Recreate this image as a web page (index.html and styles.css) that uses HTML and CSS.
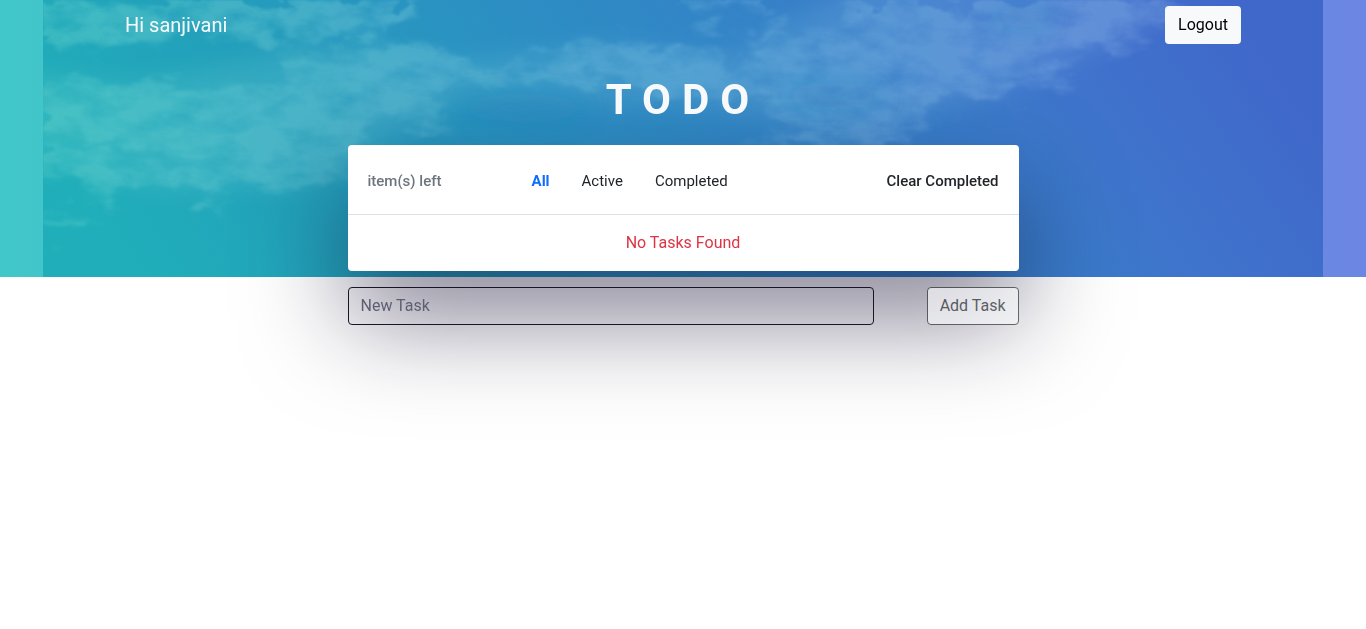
FILE: index.html
```html
<!DOCTYPE html>
<html lang="en">
<head>
<meta charset="utf-8">
<meta name="viewport" content="width=device-width, initial-scale=1">
<title>Todo</title>
<link rel="stylesheet" href="styles.css">
</head>
<body>
<div class="banner" aria-hidden="true">
  <svg class="sky" viewBox="0 0 1280 277" preserveAspectRatio="xMidYMin slice">
    <defs>
      <linearGradient id="sky" x1="0" y1="0.55" x2="1" y2="0.4">
        <stop offset="0" stop-color="#20afba"/>
        <stop offset="0.2" stop-color="#239fbb"/>
        <stop offset="0.42" stop-color="#2c8fc3"/>
        <stop offset="0.65" stop-color="#3680c8"/>
        <stop offset="0.82" stop-color="#3f74cc"/>
        <stop offset="1" stop-color="#4067ca"/>
      </linearGradient>
      <linearGradient id="veil" gradientUnits="userSpaceOnUse" x1="0" y1="0" x2="1280" y2="0">
        <stop offset="0" stop-color="#58cbc8"/>
        <stop offset="0.5" stop-color="#64aed8"/>
        <stop offset="1" stop-color="#7896e0"/>
      </linearGradient>
      <filter id="cloud" x="0" y="0" width="1280" height="277" filterUnits="userSpaceOnUse" color-interpolation-filters="sRGB">
        <feTurbulence type="fractalNoise" baseFrequency="0.025 0.045" numOctaves="6" seed="21" result="n"/>
        <feGaussianBlur in="SourceGraphic" stdDeviation="5" result="s"/>
        <feDisplacementMap in="s" in2="n" scale="60" xChannelSelector="R" yChannelSelector="G" result="d"/>
        <feGaussianBlur in="d" stdDeviation="1" result="b"/>
        <feColorMatrix in="n" values="0 0 0 0 1  0 0 0 0 1  0 0 0 0 1  0 0 2 0 -0.25" result="m"/>
        <feComposite in="b" in2="m" operator="in"/>
      </filter>
      <filter id="soft" x="-20%" y="-60%" width="140%" height="220%"><feGaussianBlur stdDeviation="12"/></filter>
    </defs>
    <rect width="1280" height="277" fill="url(#sky)"/>
    <g fill="url(#veil)" opacity="0.3" filter="url(#soft)">
      <path d="M-20 75L90 84L260 50L420 60L560 46L690 55L820 -20L1120 -20L1110 25L980 85L830 130L640 105L420 100L330 150L270 185L120 190L-20 150Z"/>
    </g>
    <g fill="url(#veil)" opacity="0.56" filter="url(#cloud)">
      <path d="M-30 -30H40L60 5L95 18L130 -30H240L260 5L330 -30H400L350 30L240 42L150 28L100 46L10 42L-30 12Z"/>
      <path d="M-30 80L60 86L110 80L160 92L190 80L250 86L232 60L262 48L290 58L320 42L390 44L420 70L470 72L510 50L570 42L640 44L690 68L760 40L800 24L820 -30H1110L1150 -10L1130 26L1070 46L980 52L1030 76L970 96L900 102L880 122L820 144L760 118L700 98L600 92L560 86L490 78L430 86L380 106L420 136L350 124L300 144L330 168L270 188L210 178L160 198L110 180L60 190L10 178L-30 178L-30 145L60 150L80 168L170 170L130 150L60 140L-30 124Z"/>
      <path d="M610 -20H750L710 14L650 12ZM700 30L735 28L748 44L716 44ZM-20 220L30 216L65 222L15 234ZM795 116L820 98L850 98L880 126L850 150H700L740 130Z"/>
    </g>
    <g fill="#177fbd" filter="url(#soft)">
      <ellipse cx="480" cy="108" rx="65" ry="15" opacity="0.25"/>
      <ellipse cx="980" cy="17" rx="30" ry="12" opacity="0.3"/>
      <ellipse cx="790" cy="96" rx="50" ry="14" opacity="0.3"/>
    </g>
  </svg>
</div>

<header class="nav container">
  <span class="greeting">Hi sanjivani</span>
  <button class="btn btn-light" type="button">Logout</button>
</header>

<main class="todo">
  <h1 class="title">TODO</h1>
  <section class="card">
    <div class="toolbar">
      <span class="count">item(s) left</span>
      <nav class="filters" aria-label="Filter tasks">
        <a class="filter active" href="#all">All</a>
        <a class="filter" href="#active">Active</a>
        <a class="filter" href="#completed">Completed</a>
      </nav>
      <button class="clear" type="button">Clear Completed</button>
    </div>
    <p class="empty">No Tasks Found</p>
  </section>
  <form class="new-task">
    <input class="field" type="text" placeholder="New Task" aria-label="New Task">
    <button class="btn btn-add" type="submit" disabled>Add Task</button>
  </form>
</main>
</body>
</html>
```
FILE: styles.css
```css
* {
  box-sizing: border-box;
}

body {
  margin: 0;
  min-height: 100vh;
  position: relative;
  background: #fff;
  color: #212529;
  font-family: Roboto, "Open Sans", sans-serif;
  font-size: 16px;
  line-height: 24px;
}

.banner {
  position: absolute;
  z-index: -1;
  top: 0;
  left: 0;
  width: 100%;
  height: 44vh;
  overflow: hidden;
  display: flex;
  justify-content: center;
  background: linear-gradient(90deg, #41c7c9, #6b86e3);
}

.sky {
  flex: none;
  width: 1280px;
  height: 100%;
}

.container {
  max-width: 1140px;
  margin: 0 auto;
  padding: 6px 12px;
}

.nav {
  display: flex;
  align-items: center;
  justify-content: space-between;
}

.greeting {
  color: #f8f9fa;
  font-size: 20px;
}

.btn {
  padding: 6px 12px;
  border: 1px solid transparent;
  border-radius: 4px;
  font: inherit;
}

.btn-light {
  background: #f8f9fa;
  color: #000;
}

.todo {
  max-width: 671px;
  margin: 0 auto;
}

.title {
  margin: 24px 0 20px;
  color: #f8f9fa;
  font-size: 42px;
  font-weight: 700;
  line-height: 51px;
  letter-spacing: 11px;
  text-align: center;
}

.card {
  border-radius: 4px;
  background: #fff;
  box-shadow: 0 48px 100px rgba(17, 12, 46, 0.5);
}

.toolbar {
  display: flex;
  align-items: center;
  padding: 24px 20px 21px;
  border-bottom: 1px solid #dee2e6;
  font-size: 15px;
}

.count {
  flex: 0 0 26%;
  color: #6c757d;
  font-weight: 500;
}

.filters {
  display: flex;
  gap: 32px;
}

.filter {
  color: #212529;
  text-decoration: none;
}

.filter.active {
  color: #0d6efd;
  font-weight: 700;
}

.clear {
  margin-left: auto;
  padding: 0;
  border: 0;
  background: none;
  color: #212529;
  font: inherit;
  font-weight: 500;
}

.empty {
  margin: 0;
  padding: 16px;
  color: #dc3545;
  text-align: center;
}

.new-task {
  display: flex;
  gap: 53px;
  margin-top: 16px;
}

.field {
  flex: 1;
  min-width: 0;
  padding: 6px 12px;
  border: 1px solid #171626;
  border-radius: 4px;
  background: transparent;
  color: #212529;
  font: inherit;
}

.field::placeholder {
  color: #5d6074;
  opacity: 1;
}

.btn-add {
  border-color: #212529;
  background: #f8f9fa;
  color: #212529;
  opacity: 0.65;
}
```
